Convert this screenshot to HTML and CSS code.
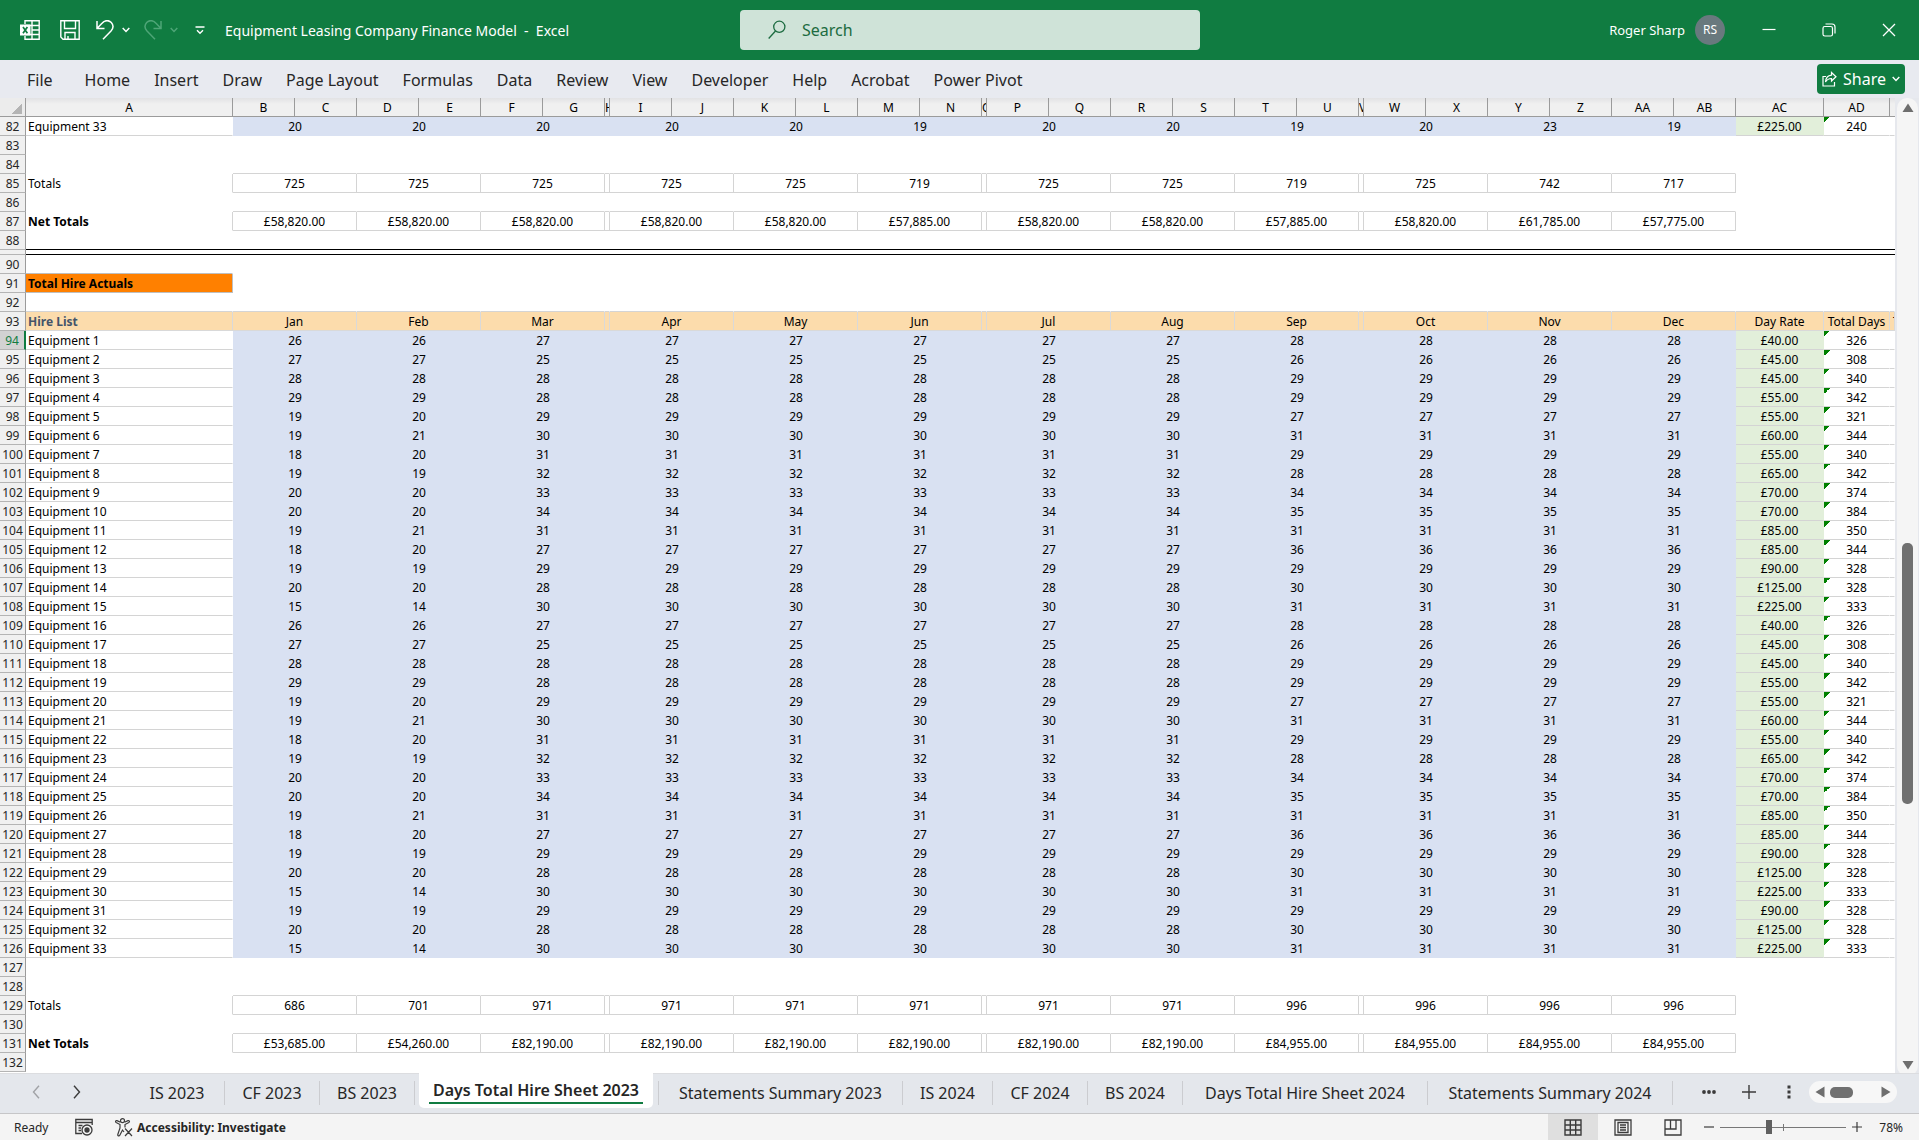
FILE: index.html
```html
<!DOCTYPE html>
<html lang="en">
<head>
<meta charset="utf-8">
<title>Equipment Leasing Company Finance Model - Excel</title>
<link rel="stylesheet" href="styles.css">
</head>
<body>
<header class="titlebar">
  <div class="quick">
    <svg class="app-icon" width="20" height="20" viewBox="0 0 20 20" fill="none" stroke="#fff" stroke-width="1.4" aria-hidden="true"><path d="M5 4V.8h14.2v18.4H5V16M12 1v18M12 5.5h7M12 10h7M12 14.5h7M5 5.5h7M5 14.5h7"/><rect x="0" y="4.500" width="10.500" height="11" fill="#fff" stroke="none"/><path d="M3 7l4.400 6.200M7.400 7L3 13.200" stroke="#107c41" stroke-width="1.700"/></svg>
    <button class="tool save" aria-label="Save"><svg width="20" height="20" viewBox="0 0 20 20" fill="none" stroke="#fff" stroke-width="1.400"><path d="M.8.8h18.400v18.400H3L.8 17zM4.500 1v7.500h11V1M5 19v-6.500h10V19M8 19v-3"/></svg></button>
    <button class="tool undo" aria-label="Undo"><svg width="18" height="20" viewBox="0 0 18 20" fill="none" stroke="#fff" stroke-width="1.500"><path d="M1 1v7.500h7.500M1.200 8.200L6 3.200C9-.2 13 0 15.300 2.500c2.300 2.700 2 6-.3 8.500L7 19.300"/></svg></button>
    <button class="tool" aria-label="Undo history"><svg width="8" height="6" viewBox="0 0 8 6" fill="none" stroke="#fff" stroke-width="1.500"><path d="M.7 1L4 4.500 7.300 1"/></svg></button>
    <button class="tool redo" aria-label="Redo" disabled><svg width="18" height="20" viewBox="0 0 18 20" fill="none" stroke="#4ea577" stroke-width="1.500"><path d="M17 1v7.500H9.500M16.800 8.200L12 3.200C9-.2 5 0 2.700 2.500c-2.300 2.700-2 6 .3 8.500L11 19.300"/></svg></button>
    <button class="tool" aria-label="Redo history" disabled><svg width="8" height="6" viewBox="0 0 8 6" fill="none" stroke="#4ea577" stroke-width="1.500"><path d="M.7 1L4 4.500 7.300 1"/></svg></button>
    <button class="tool customise" aria-label="Customise toolbar"><svg width="10" height="9" viewBox="0 0 10 9" fill="none" stroke="#fff" stroke-width="1.400"><path d="M.5 1h9M2 4.200l3 3 3-3"/></svg></button>
    <h1 class="doc-name">Equipment Leasing Company Finance Model&nbsp; -&nbsp; Excel</h1>
  </div>
  <label class="search">
    <svg width="18" height="20" viewBox="0 0 18 20" fill="none" stroke="#1c6b40" stroke-width="1.300" aria-hidden="true"><circle cx="11.300" cy="6.800" r="5.600"/><path d="M7.500 11L.7 18.500"/></svg>
    <input class="search-input" type="text" placeholder="Search" aria-label="Search">
  </label>
  <div class="account">
    <span class="user">Roger Sharp</span>
    <span class="avatar">RS</span>
    <button class="win" aria-label="Minimise"><svg width="14" height="14" viewBox="0 0 14 14" stroke="#fff" stroke-width="1.200"><path d="M.5 6.500h13"/></svg></button>
    <button class="win" aria-label="Restore"><svg width="14" height="14" viewBox="0 0 14 14" fill="none" stroke="#fff" stroke-width="1.200"><rect x="1" y="3.500" width="9.500" height="9.500" rx="1.800"/><path d="M3.500 1H10a3 3 0 0 1 3 3v6.500"/></svg></button>
    <button class="win" aria-label="Close"><svg width="14" height="14" viewBox="0 0 14 14" stroke="#fff" stroke-width="1.300"><path d="M1 1l12 12M13 1L1 13"/></svg></button>
  </div>
</header>

<nav class="ribbon" aria-label="Ribbon">
  <button class="ribbon-tab file">File</button>
  <button class="ribbon-tab">Home</button>
  <button class="ribbon-tab">Insert</button>
  <button class="ribbon-tab">Draw</button>
  <button class="ribbon-tab">Page Layout</button>
  <button class="ribbon-tab">Formulas</button>
  <button class="ribbon-tab">Data</button>
  <button class="ribbon-tab">Review</button>
  <button class="ribbon-tab">View</button>
  <button class="ribbon-tab">Developer</button>
  <button class="ribbon-tab">Help</button>
  <button class="ribbon-tab">Acrobat</button>
  <button class="ribbon-tab">Power Pivot</button>
  <button class="share"><svg width="15" height="16" viewBox="0 0 15 16" fill="none" stroke="#fff" stroke-width="1.200" aria-hidden="true"><path d="M4 5.500H1V15h11.500v-4M9.500 1.500L14 5.700 9.500 10V7.500C6.500 7.500 5 8.500 3.500 11c.3-4 2.500-6.500 6-6.800z"/></svg>Share<svg width="8" height="6" viewBox="0 0 8 6" fill="none" stroke="#fff" stroke-width="1.400" aria-hidden="true"><path d="M.7 1L4 4.500 7.300 1"/></svg></button>
</nav>

<main class="workspace">
  <div class="sheet">
    <table class="grid" id="grid">
      <colgroup id="cols"></colgroup>
      <thead id="head"></thead>
      <tbody id="body"></tbody>
    </table>
  </div>
  <div class="vscroll">
    <button class="arrow" aria-label="Scroll up"><svg width="12" height="10" viewBox="0 0 12 10"><path d="M6 .5L11.500 9H.5z" fill="#6e6e6e"/></svg></button>
    <div class="vtrack"><div class="vthumb"></div></div>
    <button class="arrow" aria-label="Scroll down"><svg width="12" height="10" viewBox="0 0 12 10"><path d="M6 9.500L.5 1h11z" fill="#6e6e6e"/></svg></button>
  </div>
</main>

<nav class="sheetbar" aria-label="Sheets">
  <div class="sheet-nav">
    <button class="tool" aria-label="Previous sheet"><svg width="8" height="14" viewBox="0 0 8 14" fill="none" stroke="#a0a2a6" stroke-width="1.400"><path d="M7 .7L1.500 7 7 13.300"/></svg></button>
    <button class="tool" aria-label="Next sheet"><svg width="8" height="14" viewBox="0 0 8 14" fill="none" stroke="#3b3b3b" stroke-width="1.400"><path d="M1 .7L6.500 7 1 13.300"/></svg></button>
  </div>
  <button class="sheet-tab">IS 2023</button>
  <button class="sheet-tab">CF 2023</button>
  <button class="sheet-tab">BS 2023</button>
  <button class="sheet-tab active"><span class="active-name">Days Total Hire Sheet 2023</span></button>
  <button class="sheet-tab wide first">Statements Summary 2023</button>
  <button class="sheet-tab short">IS 2024</button>
  <button class="sheet-tab">CF 2024</button>
  <button class="sheet-tab">BS 2024</button>
  <button class="sheet-tab wide">Days Total Hire Sheet 2024</button>
  <button class="sheet-tab wide">Statements Summary 2024</button>
  <div class="sheet-tools">
    <button class="tool" aria-label="More sheets"><svg width="14" height="14" viewBox="0 0 14 14" fill="#3b3b3b"><circle cx="2" cy="7" r="1.900"/><circle cx="7" cy="7" r="1.900"/><circle cx="12" cy="7" r="1.900"/></svg></button>
    <button class="tool" aria-label="New sheet"><svg width="14" height="14" viewBox="0 0 14 14" stroke="#3b3b3b" stroke-width="1.400"><path d="M0 7h14M7 0v14"/></svg></button>
    <button class="tool resize" aria-label="Resize tabs"><svg width="4" height="14" viewBox="0 0 4 14" fill="#3b3b3b"><path d="M.5.500h3v3h-3zM.5 5.500h3v3h-3zM.5 10.500h3v3h-3z"/></svg></button>
    <div class="hscroll">
      <button class="tool" aria-label="Scroll left"><svg width="10" height="12" viewBox="0 0 10 12"><path d="M9.500.5v11L.5 6z" fill="#6e6e6e"/></svg></button>
      <div class="hthumb"></div>
      <button class="tool" aria-label="Scroll right"><svg width="10" height="12" viewBox="0 0 10 12"><path d="M.5.500v11L9.500 6z" fill="#6e6e6e"/></svg></button>
    </div>
  </div>
</nav>

<footer class="status">
  <span class="ready">Ready</span>
  <button class="tool" aria-label="Record macro"><svg width="18" height="18" viewBox="0 0 18 18" fill="none" stroke="#3b3b3b" stroke-width="1.300"><path d="M7 15.500H.8V1.500h16.400V7M1 4.500h16M3.500 7.500h4M3.500 10h2.500M3.500 12.500H6"/><circle cx="12" cy="12" r="5"/><circle cx="12" cy="12" r="2" fill="#3b3b3b"/></svg></button>
  <button class="access"><svg width="18" height="19" viewBox="0 0 18 19" fill="none" stroke="#3b3b3b" stroke-width="1.200" aria-hidden="true"><circle cx="7.500" cy="2.700" r="2"/><path d="M5.500 4.200L2 2.600c-1.400-.4-2 1.200-.8 1.900L5 6.500v3.500L2.800 16.500c-.3 1.500 1.400 2 2 .7L7.500 12l1.500 2M9.500 4.200L13 2.600c1.400-.4 2 1.200.8 1.900L10 6.500V9.500M10 10.500l7 7.500M17 10.500L10 18"/></svg>Accessibility: Investigate</button>
  <div class="views">
    <button class="view on" aria-label="Normal view"><svg width="18" height="17" viewBox="0 0 18 17" fill="none" stroke="#3b3b3b" stroke-width="1.400"><path d="M1 1h16v15H1zM1 6h16M1 11h16M6.300 1v15M11.700 1v15"/></svg></button>
    <button class="view" aria-label="Page layout view"><svg width="18" height="17" viewBox="0 0 18 17" fill="none" stroke="#3b3b3b" stroke-width="1.300"><path d="M1 1h16v15H1zM4 3.500h10v10H4zM6 6h6M6 8.500h6M6 11h6"/></svg></button>
    <button class="view" aria-label="Page break view"><svg width="18" height="17" viewBox="0 0 18 17" fill="none" stroke="#3b3b3b" stroke-width="1.300"><path d="M1 1h16v15H1zM1 10h11V1M6.500 1v9"/></svg></button>
  </div>
  <div class="zoom">
    <button class="tool" aria-label="Zoom out"><svg width="10" height="10" viewBox="0 0 10 10" stroke="#3b3b3b" stroke-width="1.200"><path d="M0 5h10"/></svg></button>
    <input class="slider" type="range" min="0" max="100" value="38" aria-label="Zoom">
    <button class="tool" aria-label="Zoom in"><svg width="10" height="10" viewBox="0 0 10 10" stroke="#3b3b3b" stroke-width="1.200"><path d="M0 5h10M5 0v10"/></svg></button>
    <output class="percent">78%</output>
  </div>
</footer>
<script src="sheet.js"></script>
</body>
</html>
```
FILE: styles.css
```css
* { box-sizing: border-box; }

body {
  margin: 0;
  height: 100vh;
  display: flex;
  flex-direction: column;
  overflow: hidden;
  background: #e6e8ed;
  color: #262626;
  font-family: "Noto Sans", "Open Sans", sans-serif;
}

button {
  margin: 0;
  padding: 0;
  border: 0;
  background: none;
  color: inherit;
  font: inherit;
  white-space: nowrap;
}

svg { display: block; flex: none; }

.tool { display: flex; align-items: center; justify-content: center; }

/* Title bar */
.titlebar {
  flex: none;
  height: 60px;
  display: grid;
  grid-template-columns: 740fr 460px 719fr;
  align-items: center;
  background: #107c41;
  color: #fff;
}

.quick { display: flex; align-items: center; padding-left: 20px; min-width: 0; }
.save { margin-left: 20px; }
.undo { margin: 0 8px 0 16px; }
.redo { margin: 0 8px 0 14px; }
.customise { margin: 0 20px 0 17px; }

.doc-name {
  margin: 0;
  font-size: 14px;
  font-weight: 400;
  white-space: nowrap;
}

.search {
  height: 40px;
  display: flex;
  align-items: center;
  gap: 16px;
  padding: 0 28px;
  border-radius: 4px;
  background: #cfe3d8;
}

.search-input {
  flex: 1;
  min-width: 0;
  padding: 0;
  border: 0;
  outline: 0;
  background: none;
  color: #1c6b40;
  font: 16px/24px "Noto Sans", sans-serif;
}
.search-input::placeholder { color: #1c6b40; opacity: 1; }

.account {
  display: flex;
  align-items: center;
  justify-content: flex-end;
}
.user { font-size: 13px; margin-right: 10px; }
.avatar {
  width: 30px;
  height: 30px;
  margin-right: 14px;
  border-radius: 50%;
  background: #69797e;
  font-size: 12px;
  line-height: 30px;
  text-align: center;
}
.win {
  width: 60px;
  height: 60px;
  display: flex;
  align-items: center;
  justify-content: center;
}

/* Ribbon */
.ribbon {
  flex: none;
  height: 38px;
  display: flex;
  align-items: center;
  padding: 0 14px 0 15px;
  background: #e8eaf0;
}
.ribbon-tab { padding: 2px 12px 0; font-size: 16px; line-height: 24px; }
.file { margin-right: 8px; }

.share {
  height: 30px;
  display: flex;
  align-items: center;
  gap: 6px;
  margin-left: auto;
  padding: 0 5px;
  border-radius: 4px;
  background: #107c41;
  color: #fff;
  font-size: 16px;
}

/* Worksheet */
.workspace { flex: 1; min-height: 0; display: flex; }

.sheet {
  flex: 1;
  min-width: 0;
  overflow: hidden;
  background: #fff;
}

.grid {
  width: 100%;
  table-layout: fixed;
  border-collapse: separate;
  border-spacing: 0;
  color: #000;
  font-size: 12px;
  line-height: 16px;
}

.c-num { width: 26px; }
.c-name { width: 207px; }
.c-half { width: 62px; }
.c-gap { width: 5px; }
.c-rate { width: 88px; }
.c-days { width: 66px; }

.grid th,
.grid td {
  height: 19px;
  padding: 2px 0 0;
  border: solid transparent;
  border-width: 0 1px 1px 0;
  font-weight: 400;
  text-align: center;
  white-space: nowrap;
  overflow: hidden;
}

.grid thead th {
  border-color: #9b9b9b;
  background: linear-gradient(#e2e2e4, #f0f0f0 6px);
}
.grid thead th:last-child { border-right: 0; }
.grid thead .corner {
  background: linear-gradient(135deg, transparent 0 50%, #b4b4b4 50%) 11px 5px / 11px 11px no-repeat #ececec;
}

.grid .num {
  border-color: #b4b4b4;
  border-right-color: #9b9b9b;
  background: #f0f0f0;
  color: #262626;
}
.grid .num.current {
  border-right: 2px solid #107c41;
  background: #d2d2d2;
  color: #107c41;
}

.grid .label { padding-left: 2px; text-align: left; }
.grid .bold { font-weight: 700; }

.grid .data .label { border-bottom-color: #d4d4d4; }
.grid .data .month,
.grid .data .gap { border-right: 0; border-bottom-color: #d9e1f2; background: #d9e1f2; }
.grid .data .rate { border-bottom-color: #d4d4d4; background: #e2efda; }
.grid .data .days,
.grid .data .rest { border-bottom-color: #d4d4d4; }
.grid .data .days {
  background: linear-gradient(135deg, #008000 0 50%, transparent 50%) 0 0 / 6px 6px no-repeat;
}

.grid .before-box .month,
.grid .before-box .gap,
.grid .totals .month,
.grid .totals .gap { border-bottom-color: #d4d4d4; }
.grid .totals .month,
.grid .totals .gap,
.grid .totals .label { border-right-color: #d4d4d4; }

.grid .black td { border-bottom-color: #000; border-right: 0; }
.grid .thin th,
.grid .thin td { height: 5px; padding: 0; line-height: 1px; font-size: 1px; }

.grid .section { border-color: #bfbfbf; background: #ff8000; }
.grid .above-section .label { border-bottom-color: #bfbfbf; }

.grid .before-months td { border-bottom-color: #d4d4d4; }
.grid .months td { border-color: #d9d9d9; background: #fcdcac; }
.grid .months .label { color: #44546a; }
.grid .months .rest { padding-left: 3px; text-align: left; text-overflow: clip; }

/* Scroll bars */
.vscroll {
  flex: none;
  width: 21px;
  margin: 0 1px -3px 2px;
  display: flex;
  flex-direction: column;
  align-items: center;
  padding: 5px 0 6px;
  border-radius: 10px;
  background: #f5f5f5;
}
.vtrack { flex: 1; display: flex; flex-direction: column; align-items: center; }
.vtrack::before { content: ""; flex: 430 1 0; }
.vtrack::after { content: ""; flex: 256 1 0; }
.vthumb { flex: 261 1 0; width: 11px; border-radius: 5px; background: #707070; }

/* Sheet tabs */
.sheetbar {
  flex: none;
  height: 41px;
  display: flex;
  border-bottom: 1px solid #c6c6c8;
  background: #e4e7ec;
  box-shadow: inset 0 1px #dcdde0;
}
.sheet-nav { width: 130px; display: flex; align-items: center; gap: 33px; padding: 0 0 3px 32px; }
.sheet-tab {
  width: 95px;
  height: 24px;
  margin-top: 8px;
  border-right: 1px solid #cbccd0;
  font-size: 16px;
  line-height: 24px;
}
.sheet-tab.short { width: 90px; }
.sheet-tab.wide { width: 245px; }
.sheet-tab.first { border-left: 1px solid #cbccd0; }
.sheet-tab.active {
  width: 234px;
  height: 35px;
  margin: 0 5px 0 4px;
  padding: 0 10px 4px;
  border: 0;
  border-radius: 0 0 5px 5px;
  background: #fff;
  font-weight: 600;
}
.active-name { display: block; height: 31px; border-bottom: 2px solid #107c41; line-height: 34px; }

.sheet-tools { display: flex; align-items: center; gap: 26px; margin-left: auto; padding: 0 22px 2px 0; }
.resize { margin-left: 5px; }
.hscroll {
  width: 88px;
  height: 22px;
  display: flex;
  align-items: center;
  margin-left: -8px;
  padding: 0 6px;
  border-radius: 11px;
  background: #f7f7f7;
}
.hthumb { width: 23px; height: 11px; margin: 0 auto 0 5px; border-radius: 5px; background: #707070; }

/* Status bar */
.status {
  flex: none;
  height: 26px;
  display: flex;
  align-items: center;
  padding-left: 14px;
  background: #f4f4f4;
  font-size: 12px;
}
.ready { width: 61px; }
.access { display: flex; align-items: center; gap: 4px; margin-left: 22px; font-weight: 700; }
.views { display: flex; height: 26px; margin-left: auto; }
.view { width: 50px; display: flex; align-items: center; justify-content: center; }
.view.on { background: #dfdfdf; }

.zoom { display: flex; align-items: center; gap: 6px; padding: 0 16px 0 6px; }
.slider {
  appearance: none;
  width: 126px;
  height: 16px;
  margin: 0;
  background:
    linear-gradient(#777, #777) 50% 50% / 1px 7px no-repeat,
    linear-gradient(#777, #777) 50% 50% / 100% 1px no-repeat;
}
.slider::-webkit-slider-thumb {
  appearance: none;
  width: 6px;
  height: 14px;
  background: #606060;
}
.percent { width: 35px; text-align: right; }
```
FILE: sheet.js
```js
const MONTHS = ["Jan", "Feb", "Mar", "Apr", "May", "Jun", "Jul", "Aug", "Sep", "Oct", "Nov", "Dec"];

// January, February, March to August, September to December, day rate, total days
const HIRE = [
  [26, 26, 27, 28, 40, 326], [27, 27, 25, 26, 45, 308], [28, 28, 28, 29, 45, 340],
  [29, 29, 28, 29, 55, 342], [19, 20, 29, 27, 55, 321], [19, 21, 30, 31, 60, 344],
  [18, 20, 31, 29, 55, 340], [19, 19, 32, 28, 65, 342], [20, 20, 33, 34, 70, 374],
  [20, 20, 34, 35, 70, 384], [19, 21, 31, 31, 85, 350], [18, 20, 27, 36, 85, 344],
  [19, 19, 29, 29, 90, 328], [20, 20, 28, 30, 125, 328], [15, 14, 30, 31, 225, 333]
];
const LAST_ROWS = HIRE.slice(12);

const spread = (jan, feb, mid, end) => [jan, feb, ...Array(6).fill(mid), ...Array(4).fill(end)];
const pounds = n => "£" + n.toLocaleString("en-GB", { minimumFractionDigits: 2 });

function cell(className, text = "", span = 1) {
  const td = document.createElement("td");
  td.className = className;
  td.textContent = text;
  td.colSpan = span;
  return td;
}

const tbody = document.getElementById("body");

function addRow(number, rowClass = "", label = "", values = [], rate = "", days = "", rest = "", labelClass = "") {
  const tr = document.createElement("tr");
  tr.className = rowClass;
  const th = document.createElement("th");
  th.scope = "row";
  th.className = number === 94 ? "num current" : "num";
  th.textContent = number === 89 ? "" : number;
  tr.append(th, cell("label " + labelClass, label));
  MONTHS.forEach((_, i) => {
    tr.append(cell("month", values[i] ?? "", 2));
    if (i === 2 || i === 5 || i === 8) tr.append(cell("gap"));
  });
  tr.append(cell("rate", rate), cell("days", days), cell("rest", rest));
  tbody.append(tr);
}

// Column widths and letters
const letters = [..."ABCDEFGHIJKLMNOPQRSTUVWXYZ", "AA", "AB", "AC", "AD", ""];
const widths = { A: "c-name", H: "c-gap", O: "c-gap", V: "c-gap", AC: "c-rate", AD: "c-days", "": "" };
const cols = document.getElementById("cols");
const headRow = document.createElement("tr");
["num", ...letters].forEach((letter, i) => {
  const col = document.createElement("col");
  col.className = i === 0 ? "c-num" : widths[letter] ?? "c-half";
  cols.append(col);
  const th = document.createElement("th");
  th.scope = "col";
  if (i === 0) th.className = "corner";
  else th.textContent = letter;
  headRow.append(th);
});
document.getElementById("head").append(headRow);

// Planned hire, end of block
addRow(82, "data", "Equipment 33", [20, 20, 20, 20, 20, 19, 20, 20, 19, 20, 23, 19], pounds(225), 240);
addRow(83);
addRow(84, "before-box");
addRow(85, "totals", "Totals", [725, 725, 725, 725, 725, 719, 725, 725, 719, 725, 742, 717]);
addRow(86, "before-box");
addRow(87, "totals", "Net Totals",
  [58820, 58820, 58820, 58820, 58820, 57885, 58820, 58820, 57885, 58820, 61785, 57775].map(pounds), "", "", "", "bold");
addRow(88, "black");
addRow(89, "black thin");
addRow(90, "above-section");

// Actual hire
addRow(91, "", "Total Hire Actuals", [], "", "", "", "bold section");
addRow(92, "before-months");
addRow(93, "months", "Hire List", MONTHS, "Day Rate", "Total Days", "Total", "bold");
[...HIRE, ...HIRE, ...LAST_ROWS].forEach(([jan, feb, mid, end, rate, days], i) => {
  addRow(94 + i, "data", "Equipment " + (i + 1), spread(jan, feb, mid, end), pounds(rate), days);
});
addRow(127);
addRow(128, "before-box");
addRow(129, "totals", "Totals", spread(686, 701, 971, 996));
addRow(130, "before-box");
addRow(131, "totals", "Net Totals", spread(53685, 54260, 82190, 84955).map(pounds), "", "", "", "bold");
addRow(132);
```
